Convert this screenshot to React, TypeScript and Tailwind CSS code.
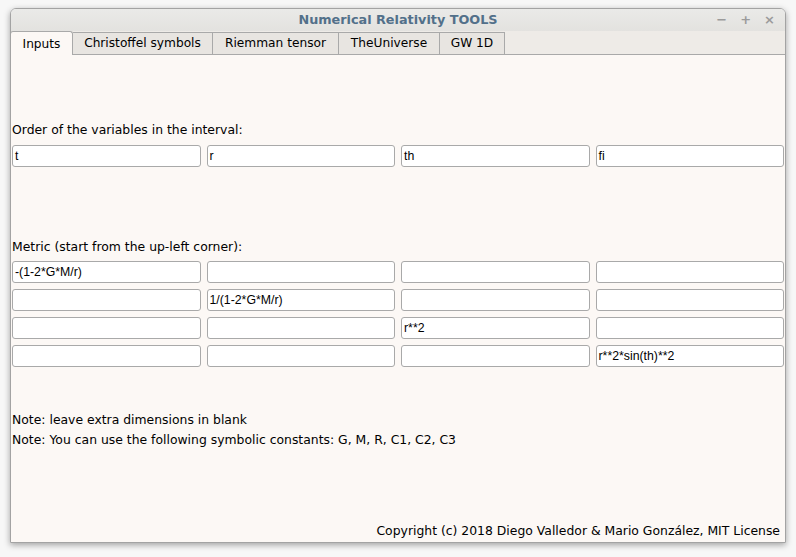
import React from "react";

const font = { fontFamily: '"DejaVu Sans", sans-serif' };

function Field({ v = "" }: { v?: string }) {
  return (
    <div
      className="h-[22px] bg-white border border-[#a9a9a9] rounded-[3px] pl-[2px] flex items-center text-[12.3px] text-black leading-none"
      style={{ fontFamily: '"Liberation Sans", Arial, sans-serif' }}
    >
      {v}
    </div>
  );
}

function Row({ vals }: { vals: string[] }) {
  return (
    <div className="grid grid-cols-4 gap-x-[6px]">
      {vals.map((v, i) => (
        <Field key={i} v={v} />
      ))}
    </div>
  );
}

export default function App() {
  const tabs = ["Christoffel symbols", "Riemman tensor", "TheUniverse", "GW 1D"];
  const tabW = [140, 126, 101, 65];
  return (
    <div className="w-[796px] h-[557px] bg-[#f7f7f7] pt-[8px] pl-[10px]" style={font}>
      <div className="w-[776px] h-[535px] border border-[#a3a3a3] rounded-t-[6px] flex flex-col shadow-[0_2px_6px_rgba(0,0,0,0.35)] overflow-hidden">
        {/* title bar */}
        <div className="h-[22px] bg-gradient-to-b from-[#eaeae8] to-[#e3e2df] relative flex items-center justify-center shrink-0">
          <span className="text-[12.8px] font-bold text-[#52708a]">Numerical Relativity TOOLS</span>
          <div className="absolute right-[10px] top-0 h-full flex items-center gap-[13px] text-[#9b9b9b] text-[13px] font-bold">
            <span>−</span>
            <span>+</span>
            <span>×</span>
          </div>
        </div>
        {/* tab bar */}
        <div className="h-[24px] bg-[#eeebe7] flex items-end shrink-0 relative">
          <div className="absolute left-0 right-0 bottom-0 h-px bg-[#a9a9a9]" />
          <div className="relative z-10 w-[63px] h-[24px] bg-[#fcf8f5] border border-b-0 border-[#a9a9a9] rounded-t-[3px] flex items-center justify-center text-[12.2px] text-black -ml-px pt-px">
            Inputs
          </div>
          {tabs.map((t, i) => (
            <div
              key={t}
              className="h-[23px] bg-[#e8e5e1] border border-l-0 border-[#a9a9a9] flex items-center justify-center text-[12.2px] text-black"
              style={{ width: tabW[i] }}
            >
              {t}
            </div>
          ))}
        </div>
        {/* content */}
        <div className="flex-1 bg-[#fcf8f5] pl-px pr-px flex flex-col text-[12.4px] text-black">
          <div className="h-[16px] mt-[67px] leading-[16px]">Order of the variables in the interval:</div>
          <div className="mt-[7px]">
            <Row vals={["t", "r", "th", "fi"]} />
          </div>
          <div className="h-[16px] mt-[72px] leading-[16px]">Metric (start from the up-left corner):</div>
          <div className="mt-[6px] flex flex-col gap-[6px]">
            <Row vals={["-(1-2*G*M/r)", "", "", ""]} />
            <Row vals={["", "1/(1-2*G*M/r)", "", ""]} />
            <Row vals={["", "", "r**2", ""]} />
            <Row vals={["", "", "", "r**2*sin(th)**2"]} />
          </div>
          <div className="h-[16px] mt-[45px] leading-[16px]">Note: leave extra dimensions in blank</div>
          <div className="h-[16px] mt-[4px] leading-[16px]">Note: You can use the following symbolic constants: G, M, R, C1, C2, C3</div>
          <div className="flex-1" />
          <div className="h-[16px] mb-[3px] leading-[16px] text-right pr-[4px]">
            Copyright (c) 2018 Diego Valledor &amp; Mario González, MIT License
          </div>
        </div>
      </div>
    </div>
  );
}
